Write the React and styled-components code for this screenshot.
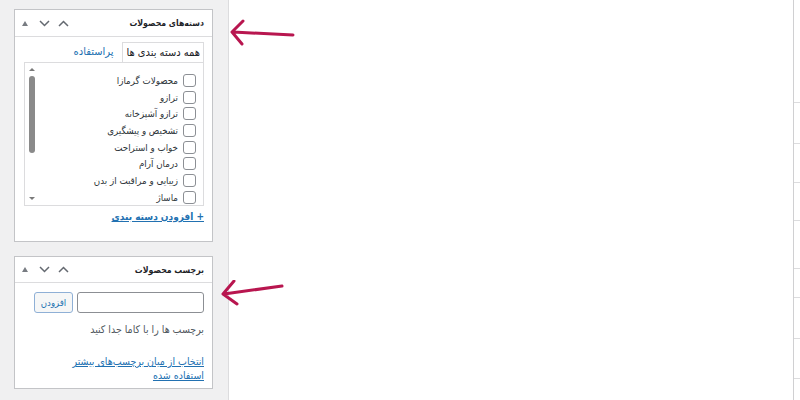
import React from "react";
import styled, { createGlobalStyle } from "styled-components";

const GlobalStyle = createGlobalStyle`
  html, body {
    margin: 0;
    padding: 0;
    background: #fff;
  }
  body {
    font-family: "DejaVu Sans Condensed", "DejaVu Sans", "Noto Sans", sans-serif;
    color: #2c3338;
  }
`;

const Page = styled.div`
  position: relative;
  display: flex;
  width: 800px;
  height: 400px;
  overflow: hidden;
`;

const Sidebar = styled.div`
  width: 199px;
  flex: none;
  background: #f0f0f1;
  border-right: 1px solid #dcdcde;
  padding: 9px 15px 0 14px;
  display: flex;
  flex-direction: column;
  gap: 14px;
`;

const Main = styled.div`
  flex: 1;
  display: flex;
  background: #fff;
`;

const Spacer = styled.div`
  flex: 1;
`;

const EdgeTable = styled.div`
  width: 6px;
  border-left: 1px solid #d0d0d2;
  display: flex;
  flex-direction: column;
`;

const EdgeRow = styled.div`
  height: ${p => p.h}px;
  flex: none;
  border-bottom: 1px solid #dcdcde;
  box-sizing: border-box;
`;

const Box = styled.div`
  direction: rtl;
  background: #fff;
  border: 1px solid #c3c4c7;
  height: ${p => p.h}px;
  box-sizing: border-box;
  display: flex;
  flex-direction: column;
`;

const BoxHeader = styled.div`
  height: ${p => p.h}px;
  flex: none;
  border-bottom: 1px solid #dcdcde;
  display: flex;
  align-items: center;
  justify-content: space-between;
  padding: 0 8px 0 7px;
`;

const BoxTitle = styled.h2`
  margin: 0;
  font-size: 8.7px;
  font-weight: bold;
  color: #1d2327;
`;

const HeaderTools = styled.div`
  display: flex;
  align-items: center;
  direction: ltr;
`;

const ToolIcon = styled.svg`
  display: block;
  margin-left: ${p => p.gap || 0}px;
`;

const BoxBody = styled.div`
  padding: ${p => p.pad};
  display: flex;
  flex-direction: column;
`;

const Tabs = styled.div`
  display: flex;
  align-items: flex-end;
  height: 20px;
`;

const Tab = styled.div`
  font-size: 11px;
  height: 20px;
  line-height: 19px;
  padding: 0 3px;
  box-sizing: border-box;
  ${p =>
    p.active
      ? `border: 1px solid #dcdcde;
         border-bottom: none;
         background: #fff;
         color: #1d2327;
         margin-bottom: -1px;
         height: 21px;`
      : `color: #2271b1;
         padding: 0 9px;`};
`;

const ListPanel = styled.div`
  border: 1px solid #dcdcde;
  height: 144px;
  box-sizing: border-box;
  display: flex;
  overflow: hidden;
`;

const ItemList = styled.ul`
  list-style: none;
  margin: 0;
  padding: 9px 7px 0 0;
  flex: 1;
`;

const Item = styled.li`
  display: flex;
  align-items: center;
  gap: 5px;
  height: 16.7px;
  font-size: 9.7px;
  color: #2c3338;
  white-space: nowrap;
`;

const Check = styled.span`
  width: 11px;
  height: 11px;
  flex: none;
  border: 1px solid #8c8f94;
  border-radius: 3px;
  background: #fff;
`;

const Scrollbar = styled.div`
  width: 10px;
  flex: none;
  display: flex;
  flex-direction: column;
  align-items: center;
  padding: 3px 0 3px 2px;
  direction: ltr;
`;

const ScrollArrow = styled.span`
  width: 0;
  height: 0;
  border-left: 3px solid transparent;
  border-right: 3px solid transparent;
  ${p =>
    p.down
      ? "border-top: 3px solid #7a7a7a;"
      : "border-bottom: 3px solid #7a7a7a;"}
  margin: 2px 0;
`;

const Thumb = styled.div`
  width: 6px;
  height: 77px;
  margin-top: 3px;
  border-radius: 3px;
  background: #8a8a8a;
`;

const ScrollTrack = styled.div`
  flex: 1;
`;

const AddLink = styled.a`
  font-size: 10px;
  line-height: 16px;
  font-weight: bold;
  color: #2271b1;
  text-decoration: underline;
  margin-top: 3px;
  align-self: flex-start;
`;

const AddRow = styled.div`
  display: flex;
  gap: 4px;
`;

const TagInput = styled.input`
  width: 127px;
  height: 21px;
  box-sizing: border-box;
  border: 1px solid #8c8f94;
  border-radius: 3px;
  padding: 0 6px;
  background: #fff;
  font: inherit;
`;

const AddButton = styled.button`
  width: 39px;
  height: 21px;
  box-sizing: border-box;
  border: 1px solid #8fb0d6;
  border-radius: 3px;
  background: #f6f7f7;
  color: #2271b1;
  font-family: "DejaVu Sans Condensed", "DejaVu Sans", sans-serif;
  font-size: 9.5px;
  padding: 0;
`;

const HelpText = styled.p`
  margin: 10px 0 0;
  font-size: 10.5px;
  color: #50575e;
`;

const TagLink = styled.a`
  margin-top: 19px;
  font-size: 10.5px;
  line-height: 14px;
  color: #2271b1;
  text-decoration: underline;
`;

const ArrowSvg = styled.svg`
  position: absolute;
  left: ${p => p.x}px;
  top: ${p => p.y}px;
  pointer-events: none;
`;

const Chevron = ({ up, gap }) => (
  <ToolIcon gap={gap} width="11" height="7" viewBox="0 0 11 7">
    <path
      d={up ? "M1 6 L5.5 1.5 L10 6" : "M1 1 L5.5 5.5 L10 1"}
      fill="none"
      stroke="#646970"
      strokeWidth="1.5"
    />
  </ToolIcon>
);

const Tools = () => (
  <HeaderTools>
    <ToolIcon width="6" height="5" viewBox="0 0 6 5">
      <path d="M0 5 L3 0 L6 5 Z" fill="#787c82" />
    </ToolIcon>
    <Chevron gap={11} />
    <Chevron up gap={8} />
  </HeaderTools>
);

const categories = [
  "محصولات گرمازا",
  "ترازو",
  "ترازو آشپزخانه",
  "تشخیص و پیشگیری",
  "خواب و استراحت",
  "درمان آرام",
  "زیبایی و مراقبت از بدن",
  "ماساژ",
];

const edgeRows = [103, 41, 39, 38, 48, 29, 41, 40, 30];

const HandArrow = ({ x, y, d }) => (
  <ArrowSvg x={x} y={y} width="80" height="32" viewBox="0 0 80 32">
    <path
      d={d}
      fill="none"
      stroke="#b8164f"
      strokeWidth="3"
      strokeLinecap="round"
      strokeLinejoin="round"
    />
  </ArrowSvg>
);

export default function App() {
  return (
    <Page>
      <GlobalStyle />
      <Sidebar>
        <Box h={233}>
          <BoxHeader h={26}>
            <BoxTitle>دسته‌های محصولات</BoxTitle>
            <Tools />
          </BoxHeader>
          <BoxBody pad="5px 8px 0 9px">
            <Tabs>
              <Tab active>همه دسته بندی ها</Tab>
              <Tab>پراستفاده</Tab>
            </Tabs>
            <ListPanel>
              <ItemList>
                {categories.map(c => (
                  <Item key={c}>
                    <Check />
                    {c}
                  </Item>
                ))}
              </ItemList>
              <Scrollbar>
                <ScrollArrow />
                <Thumb />
                <ScrollTrack />
                <ScrollArrow down />
              </Scrollbar>
            </ListPanel>
            <AddLink>+ افزودن دسته بندی</AddLink>
          </BoxBody>
        </Box>
        <Box h={133}>
          <BoxHeader h={25}>
            <BoxTitle>برچسب محصولات</BoxTitle>
            <Tools />
          </BoxHeader>
          <BoxBody pad="9px 8px 0 9px">
            <AddRow>
              <TagInput />
              <AddButton>افزودن</AddButton>
            </AddRow>
            <HelpText>برچسب ها را با کاما جدا کنید</HelpText>
            <TagLink>
              انتخاب از میان برچسب‌های بیشتر
              <br />
              استفاده شده
            </TagLink>
          </BoxBody>
        </Box>
      </Sidebar>
      <Main>
        <Spacer />
        <EdgeTable>
          {edgeRows.map((h, i) => (
            <EdgeRow key={i} h={h} />
          ))}
        </EdgeTable>
      </Main>
      <HandArrow x={228} y={18} d="M65 17 L5 14 M15 3 L4 14 L14 26" />
      <HandArrow x={220} y={280} d="M62 6 L4 14 M14 1 L3 14 L17 24" />
    </Page>
  );
}
